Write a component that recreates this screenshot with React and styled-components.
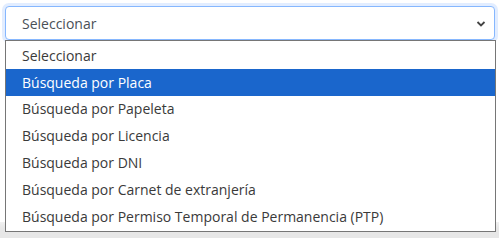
import React from "react";
import styled, { createGlobalStyle } from "styled-components";

const Global = createGlobalStyle`
  html, body { margin: 0; padding: 0; background: #ffffff; }
  body { width: 499px; height: 238px; overflow: hidden; font-family: "Open Sans", "Noto Sans", sans-serif; }
  #root { position: relative; width: 499px; height: 238px; }
`;

const Page = styled.div`
  position: relative;
  width: 499px;
  height: 238px;
  display: flex;
  flex-direction: column;
  justify-content: space-between;
`;

const Field = styled.div`
  position: relative;
  margin: 6px 4px 0 5px;
`;

const SelectBox = styled.div`
  box-sizing: border-box;
  height: 34px;
  display: flex;
  align-items: center;
  justify-content: space-between;
  padding: 0 8px 0 16px;
  border: 1px solid #86b7fe;
  border-radius: 4px;
  box-shadow: 0 0 0 3px rgba(13, 110, 253, 0.12);
  color: #495057;
  font-size: 14px;
  background: #fff;
`;

const Chevron = styled.svg`
  width: 10px;
  height: 8px;
  margin-top: 1px;
`;

const Footer = styled.div`
  height: 16px;
  background: linear-gradient(#f1f1f1, #e7e7e7 6px);
`;

const ListBox = styled.ul`
  position: absolute;
  left: 0;
  top: 34px;
  width: 491px;
  box-sizing: border-box;
  margin: 0;
  padding: 1px 0;
  list-style: none;
  background: #fff;
  border: 1px solid #767676;
  z-index: 2;
`;

const Option = styled.li`
  height: 26.8px;
  display: flex;
  align-items: center;
  padding-left: 16px;
  font-size: 14px;
  color: ${(p) => (p.$active ? "#ffffff" : "#3a3a3a")};
  background: ${(p) => (p.$active ? "#1a66cc" : "transparent")};
  white-space: nowrap;
`;

const options = [
  "Seleccionar",
  "Búsqueda por Placa",
  "Búsqueda por Papeleta",
  "Búsqueda por Licencia",
  "Búsqueda por DNI",
  "Búsqueda por Carnet de extranjería",
  "Búsqueda por Permiso Temporal de Permanencia (PTP)",
];

export default function App() {
  return (
    <>
      <Global />
      <Page>
        <Field>
          <SelectBox>
            <span>Seleccionar</span>
            <Chevron viewBox="0 0 10 8">
              <path d="M1.5 2 L5 5.5 L8.5 2" fill="none" stroke="#444" strokeWidth="1.8" />
            </Chevron>
          </SelectBox>
          <ListBox>
            {options.map((o, i) => (
              <Option key={o} $active={i === 1}>{o}</Option>
            ))}
          </ListBox>
        </Field>
        <Footer />
      </Page>
    </>
  );
}
